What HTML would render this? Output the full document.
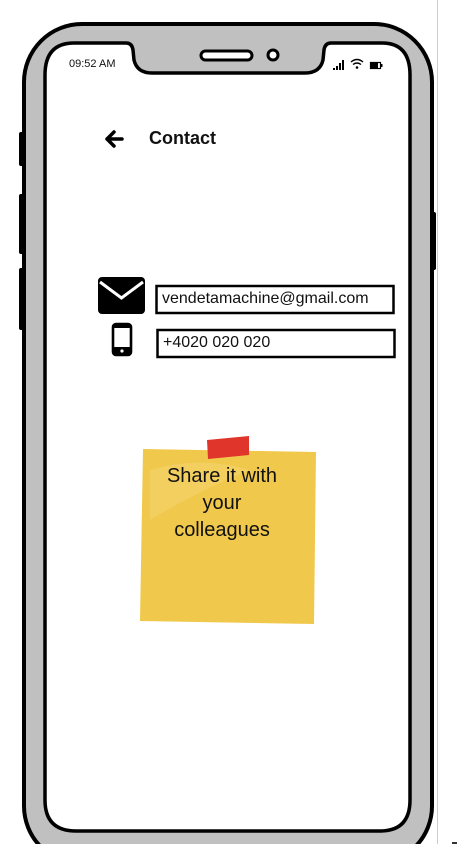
<!DOCTYPE html>
<html><head><style>
html,body{margin:0;padding:0;width:458px;height:844px;overflow:hidden;background:#fff;font-family:"Liberation Sans",sans-serif;}
.abs{position:absolute}
</style></head><body>
<svg class="abs" style="left:0;top:0" width="458" height="844" viewBox="0 0 458 844">
  <line x1="437.5" y1="0" x2="437.5" y2="844" stroke="#ccc" stroke-width="1"/>
  <rect x="452" y="842" width="5" height="2" fill="#333"/>
  <rect x="19" y="132" width="6" height="34" rx="2" fill="#000"/>
  <rect x="19" y="194" width="6" height="60" rx="2" fill="#000"/>
  <rect x="19" y="268" width="6" height="62" rx="2" fill="#000"/>
  <rect x="430" y="212" width="6" height="58" rx="2" fill="#000"/>
  <rect x="24" y="24" width="408" height="840" rx="58" fill="#c0c0c0" stroke="#000" stroke-width="4"/>
  <path d="M74 43 L126 43 Q132 43 133 50 L134 60 Q137 73 152 73 L305 73 Q320 73 323 60 L324 50 Q325 43 331 43 L382 43 Q410 43 410 75 L410 800 Q410 831 380 831 L76 831 Q45 831 45 800 L45 75 Q45 43 74 43 Z" fill="#fff" stroke="#000" stroke-width="3.5"/>
  <rect x="201" y="51" width="51" height="9" rx="4.5" fill="#fff" stroke="#000" stroke-width="3"/>
  <circle cx="273" cy="55" r="5" fill="#fff" stroke="#000" stroke-width="3"/>
  <rect x="333" y="68" width="2" height="2" fill="#000"/>
  <rect x="336" y="66" width="2" height="4" fill="#000"/>
  <rect x="339" y="63" width="2" height="7" fill="#000"/>
  <rect x="342" y="60" width="2" height="10" fill="#000"/>
  <path d="M351 62 Q357 57 363 62 M353 64.5 Q357 61.5 361 64.5" stroke="#000" stroke-width="1.4" fill="none"/>
  <circle cx="357" cy="67.5" r="1.3" fill="#000"/>
  <rect x="370.5" y="62.5" width="10" height="6" fill="none" stroke="#000" stroke-width="1.2"/>
  <rect x="371" y="63" width="7" height="5" fill="#000"/>
  <rect x="381" y="64" width="1.5" height="3" fill="#000"/>
  <path d="M122 139 L107 139 M114 132 L107 139 L114 146" stroke="#000" stroke-width="3.5" fill="none" stroke-linecap="round" stroke-linejoin="round"/>
  <rect x="98" y="277" width="47" height="37" rx="4" fill="#000"/>
  <path d="M100 282 L121.5 298 L143 282" stroke="#fff" stroke-width="3" fill="none"/>
  <rect x="113" y="324" width="18" height="31" rx="3" fill="none" stroke="#000" stroke-width="2.6"/>
  <rect x="113" y="347" width="18" height="8" rx="2" fill="#000"/>
  <circle cx="122" cy="351" r="1.6" fill="#fff"/>
  <rect x="113" y="324" width="18" height="4" rx="2" fill="#000"/>
  <rect x="156.5" y="286" width="237" height="27" fill="#fff" stroke="#000" stroke-width="2.5"/>
  <rect x="157.5" y="330" width="237" height="27" fill="#fff" stroke="#000" stroke-width="2.5"/>
  <path d="M143 449 L316 452 L314 624 L140 621 Z" fill="#f0c84b"/>
  <path d="M150 470 Q200 455 250 470 Q200 490 150 520 Z" fill="#f5d575" opacity="0.5"/>
  <path d="M207 440 L249 436 L249 455 L208 459 Z" fill="#e0352b"/>
</svg>
<div class="abs" style="left:69px;top:58px;font-size:11px;color:#111;">09:52 AM</div>
<div class="abs" style="left:149px;top:128px;font-size:18px;font-weight:bold;color:#111;">Contact</div>
<div class="abs" style="left:162px;top:290px;font-size:16px;color:#111;">vendetamachine@gmail.com</div>
<div class="abs" style="left:163px;top:334px;font-size:16px;color:#111;">+4020 020 020</div>
<div class="abs" style="left:146px;top:463px;width:152px;text-align:center;font-size:20px;line-height:27px;color:#111;">Share it with<br>your<br>colleagues</div>
</body></html>
